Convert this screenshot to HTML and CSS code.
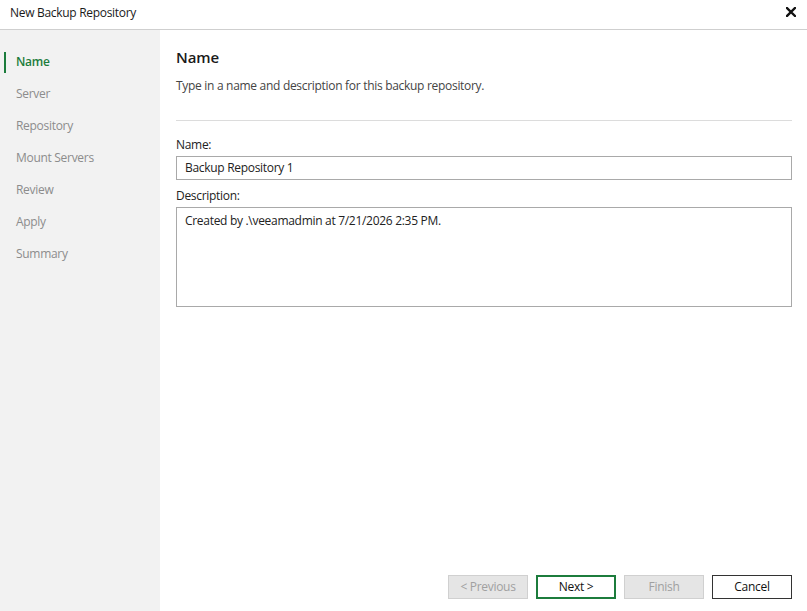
FILE: index.html
```html
<!DOCTYPE html>
<html lang="en">
<head>
    <meta charset="UTF-8">
    <title>New Backup Repository</title>
    <link rel="stylesheet" href="styles.css">
</head>
<body>
    <div class="window">
        <div class="titlebar">
            <span class="title">New Backup Repository</span>
            <svg class="close" width="10" height="10" viewBox="0 0 10 10">
                <path d="M1 1 L9 9 M9 1 L1 9" stroke="#111" stroke-width="2.4" stroke-linecap="square"/>
            </svg>
        </div>
        <div class="main">
            <div class="steps">
                <div class="step active">Name</div>
                <div class="step">Server</div>
                <div class="step">Repository</div>
                <div class="step">Mount Servers</div>
                <div class="step">Review</div>
                <div class="step">Apply</div>
                <div class="step">Summary</div>
            </div>
            <div class="content">
                <div class="header">
                    <h1>Name</h1>
                    <p>Type in a name and description for this backup repository.</p>
                </div>
                <div class="form">
                    <label>Name:</label>
                    <div class="input">Backup Repository 1</div>
                    <label>Description:</label>
                    <div class="input area">Created by .\veeamadmin at 7/21/2026 2:35 PM.</div>
                </div>
                <div class="buttons">
                    <div class="btn disabled">&lt; Previous</div>
                    <div class="btn default">Next &gt;</div>
                    <div class="btn disabled">Finish</div>
                    <div class="btn">Cancel</div>
                </div>
            </div>
        </div>
    </div>
</body>
</html>
```

FILE: styles.css
```css
body {
    margin: 0;
    font-family: "Open Sans", "Noto Sans", sans-serif;
    font-size: 12px;
    letter-spacing: -0.3px;
    color: #222;
    background: #fff;
}

.window {
    width: 807px;
    height: 611px;
    display: flex;
    flex-direction: column;
}

.titlebar {
    height: 29px;
    border-bottom: 1px solid #cfcfcf;
    display: flex;
    align-items: center;
    justify-content: space-between;
    padding: 0 11px 0 10px;
    box-sizing: content-box;
}

.title {
    font-size: 12px;
    color: #1a1a1a;
    margin-top: -4px;
}

.close {
    margin-top: -5px;
}

.main {
    flex: 1;
    display: flex;
}

.steps {
    width: 160px;
    background: #f2f2f2;
    padding-top: 22px;
}

.step {
    height: 21px;
    line-height: 19px;
    margin-bottom: 11px;
    padding-left: 16px;
    color: #8c8c8c;
}

.step.active {
    color: #1c7c3c;
    font-weight: 600;
    border-left: 2px solid #1c7c3c;
    margin-left: 4px;
    padding-left: 10px;
}

.content {
    flex: 1;
    padding: 0 15px 12px 16px;
    display: flex;
    flex-direction: column;
}

.header {
    border-bottom: 1px solid #dcdcdc;
    height: 90px;
}

.header h1 {
    margin: 17px 0 0;
    font-size: 15px;
    font-weight: 600;
    letter-spacing: -0.1px;
    color: #1a1a1a;
}

.header p {
    margin: 10px 0 0;
    color: #444;
}

.form {
    flex: 1;
    display: flex;
    flex-direction: column;
    padding-top: 15px;
}

.form label {
    color: #222;
    line-height: 17px;
    margin-bottom: 3px;
}

.input {
    border: 1px solid #a9a9a9;
    height: 22px;
    line-height: 21px;
    padding: 0 8px;
    margin-bottom: 7px;
}

.input.area {
    height: 96px;
    padding-top: 2px;
}

.buttons {
    display: flex;
    justify-content: flex-end;
    gap: 8px;
}

.btn {
    width: 78px;
    height: 22px;
    line-height: 22px;
    text-align: center;
    border: 1px solid #333;
    color: #111;
}

.btn.disabled {
    background: #e5e5e5;
    border-color: #d0d0d0;
    color: #a0a0a0;
}

.btn.default {
    border: 2px solid #1c7c3c;
    width: 76px;
    height: 20px;
    line-height: 20px;
}
```
